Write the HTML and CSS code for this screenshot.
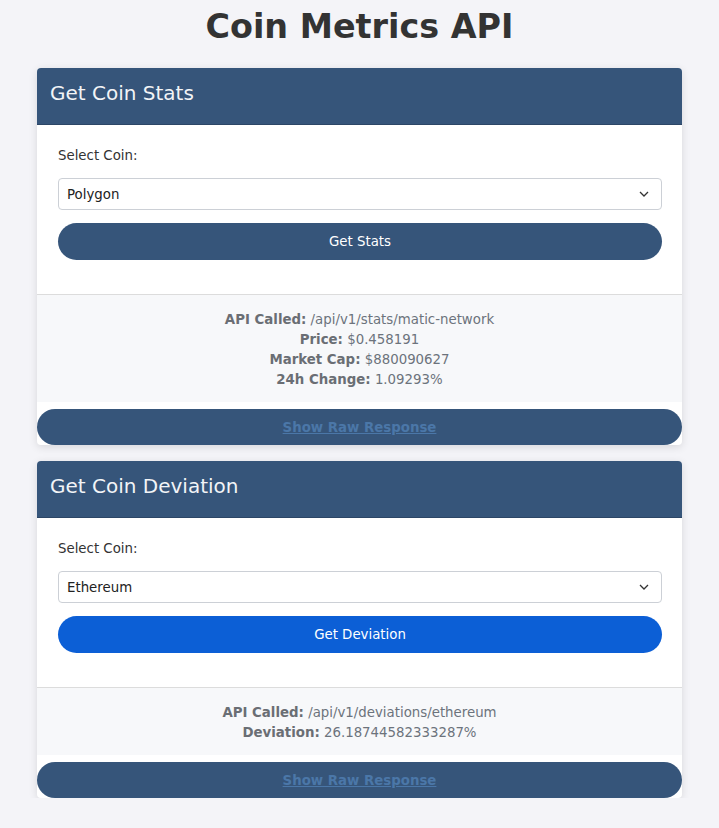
FILE: index.html
```html
<!DOCTYPE html>
<html lang="en">
<head>
<meta charset="utf-8">
<title>Coin Metrics API</title>
<link rel="stylesheet" href="styles.css">
</head>
<body>
<h1 class="title">Coin Metrics API</h1>
<main class="container">
  <section class="card">
    <div class="card-header">Get Coin Stats</div>
    <div class="card-body">
      <label class="label" for="coin1">Select Coin:</label>
      <div class="select-wrap">
        <select id="coin1" class="select">
          <option>Polygon</option>
          <option>Bitcoin</option>
          <option>Ethereum</option>
        </select>
        <svg class="chevron" width="10" height="6" viewBox="0 0 10 6"><path d="M1 1l4 4 4-4" fill="none" stroke="#333" stroke-width="1.3"/></svg>
      </div>
      <button class="btn btn-dark">Get Stats</button>
    </div>
    <div class="result">
      <div><b>API Called:</b> /api/v1/stats/matic-network</div>
      <div><b>Price:</b> $0.458191</div>
      <div><b>Market Cap:</b> $880090627</div>
      <div><b>24h Change:</b> 1.09293%</div>
    </div>
    <button class="raw"><span>Show Raw Response</span></button>
  </section>
  <section class="card">
    <div class="card-header">Get Coin Deviation</div>
    <div class="card-body">
      <label class="label" for="coin2">Select Coin:</label>
      <div class="select-wrap">
        <select id="coin2" class="select">
          <option>Ethereum</option>
          <option>Bitcoin</option>
          <option>Polygon</option>
        </select>
        <svg class="chevron" width="10" height="6" viewBox="0 0 10 6"><path d="M1 1l4 4 4-4" fill="none" stroke="#333" stroke-width="1.3"/></svg>
      </div>
      <button class="btn btn-blue">Get Deviation</button>
    </div>
    <div class="result">
      <div><b>API Called:</b> /api/v1/deviations/ethereum</div>
      <div><b>Deviation:</b> 26.18744582333287%</div>
    </div>
    <button class="raw"><span>Show Raw Response</span></button>
  </section>
</main>
</body>
</html>
```
FILE: styles.css
```css
* { box-sizing: border-box; }
body {
  margin: 0;
  background: #f4f4f8;
  font-family: "DejaVu Sans", sans-serif;
  font-size: 13.33px;
  color: #333;
}
.title {
  margin: 0;
  padding-top: 6px;
  height: 68px;
  text-align: center;
  font-size: 33.4px;
  line-height: 42px;
  font-weight: bold;
  color: #333;
}
.container {
  margin: 0 37px;
  display: flex;
  flex-direction: column;
  gap: 16px;
}
.card {
  background: #fff;
  border-radius: 4px;
  box-shadow: 0 2px 8px rgba(0,0,0,0.12);
  display: flex;
  flex-direction: column;
}
.card-header {
  background: #36557a;
  color: #f2f4f7;
  font-size: 20px;
  line-height: 29px;
  padding: 11px 13px 16px;
  border-radius: 4px 4px 0 0;
  border-bottom: 1px solid #2c4666;
}
.card-body {
  padding: 20px 20px 34px 21px;
  display: flex;
  flex-direction: column;
}
.label {
  font-size: 13.33px;
  line-height: 21px;
  margin-bottom: 12px;
  color: #333;
}
.select-wrap {
  position: relative;
  margin-bottom: 13px;
}
.select {
  display: block;
  width: 100%;
  height: 32px;
  appearance: none;
  -webkit-appearance: none;
  font-family: "DejaVu Sans", sans-serif;
  font-size: 13.33px;
  color: #222;
  background: #fff;
  border: 1px solid #ccd0d6;
  border-radius: 4px;
  padding: 0 30px 0 8px;
}
.chevron {
  position: absolute;
  right: 13px;
  top: 13px;
  pointer-events: none;
}
.btn {
  height: 37px;
  border: none;
  border-radius: 19px;
  color: #fff;
  font-family: "DejaVu Sans", sans-serif;
  font-size: 13.33px;
}
.btn-dark { background: #36557a; }
.btn-blue { background: #0c5fd6; }
.result {
  background: #f7f8fa;
  border-top: 1px solid #dcdcdc;
  padding: 15px 10px 12px;
  text-align: center;
  font-size: 13.33px;
  line-height: 20px;
  color: #6c737c;
}
.result b { color: #6a6e74; }
.raw {
  margin-top: 7px;
  height: 36px;
  border: none;
  border-radius: 18px;
  background: #36557a;
  font-family: "DejaVu Sans", sans-serif;
  font-size: 13.33px;
  font-weight: bold;
  color: #4b77a8;
  text-decoration: underline;
  padding: 0;
}
```
